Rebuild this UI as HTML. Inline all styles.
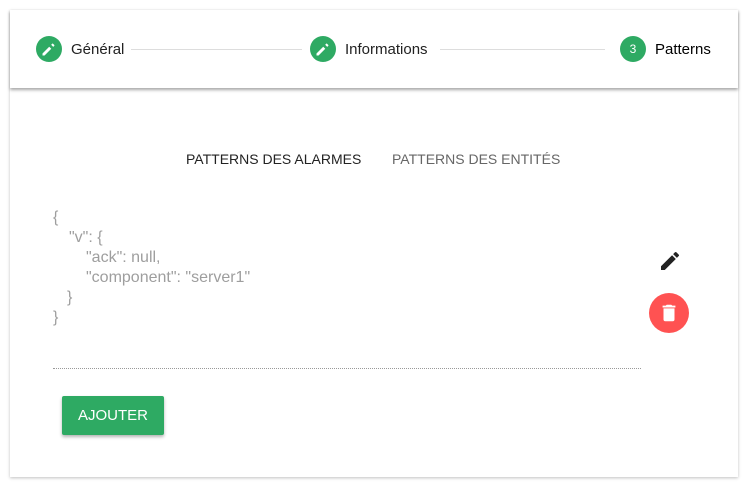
<!DOCTYPE html>
<html><head><meta charset="utf-8"><style>
body{margin:0;width:748px;height:486px;background:#fff;font-family:"Liberation Sans",sans-serif;position:relative;overflow:hidden}
.card{position:absolute;left:10px;top:10px;width:728px;height:467px;background:#fff;box-shadow:0 1px 3px rgba(0,0,0,.25)}
.head{position:absolute;left:10px;top:10px;width:728px;height:78px;background:#fff;box-shadow:0 2px 3px rgba(0,0,0,.35);z-index:2}
.c{position:absolute;width:26px;height:26px;border-radius:50%;background:#2eaa63;top:36px;color:#fff;font-size:12px;text-align:center;line-height:26px}
.t{position:absolute;top:41px;font-size:15px;color:#222}
.ln{position:absolute;top:49px;height:1px;background:#ddd}
.tab{position:absolute;top:151px;font-size:14px;color:#222}
.code{position:absolute;left:53px;top:208px;font-size:16px;line-height:20px;color:#9e9e9e;white-space:pre}
.code div{height:20px}
</style></head><body>
<div class="card"></div>
<div class="head"></div>
<div style="position:absolute;inset:0;z-index:3">
<div class="c" style="left:36px"><svg width="26" height="26" viewBox="0 0 24 24"><path fill="#fff" d="M6 16.1V18h1.9l6.2-6.2-1.9-1.9zM16.9 9c.2-.2.2-.5 0-.7l-1.2-1.2c-.2-.2-.5-.2-.7 0l-1 1 1.9 1.9z"/></svg></div>
<div class="t" style="left:71px">Général</div>
<div class="ln" style="left:131px;width:171px"></div>
<div class="c" style="left:310px"><svg width="26" height="26" viewBox="0 0 24 24"><path fill="#fff" d="M6 16.1V18h1.9l6.2-6.2-1.9-1.9zM16.9 9c.2-.2.2-.5 0-.7l-1.2-1.2c-.2-.2-.5-.2-.7 0l-1 1 1.9 1.9z"/></svg></div>
<div class="t" style="left:345px">Informations</div>
<div class="ln" style="left:440px;width:165px"></div>
<div class="c" style="left:620px">3</div>
<div class="t" style="left:655px;color:#000">Patterns</div>
<div class="tab" style="left:186px">PATTERNS DES ALARMES</div>
<div class="tab" style="left:392px;color:#666">PATTERNS DES ENTITÉS</div>
<div class="code"><div>{</div><div style="padding-left:16px">"v": {</div><div style="padding-left:33px">"ack": null,</div><div style="padding-left:33px">"component": "server1"</div><div style="padding-left:14px">}</div><div>}</div></div>
<svg style="position:absolute;left:658px;top:249px" width="24" height="24" viewBox="0 0 24 24"><path fill="#222" d="M3 17.25V21h3.75L17.81 9.94l-3.75-3.75zM20.71 7.04a1 1 0 000-1.41l-2.34-2.34a1 1 0 00-1.41 0l-1.83 1.83 3.75 3.75z"/></svg>
<div style="position:absolute;left:649px;top:293px;width:40px;height:40px;border-radius:50%;background:#ff5252"><svg style="position:absolute;left:9px;top:9px" width="22" height="22" viewBox="0 0 24 24"><path fill="#fff" d="M6 19a2 2 0 002 2h8a2 2 0 002-2V7H6zM19 4h-3.5l-1-1h-5l-1 1H5v2h14z"/></svg></div>
<div style="position:absolute;left:53px;top:368px;width:588px;border-top:1px dotted #999"></div>
<div style="position:absolute;left:62px;top:396px;width:102px;height:39px;background:#2eaa63;border-radius:2px;box-shadow:0 2px 3px rgba(0,0,0,.3);color:#fff;font-size:15px;text-align:center;line-height:40px">AJOUTER</div>
</div>
</body></html>
